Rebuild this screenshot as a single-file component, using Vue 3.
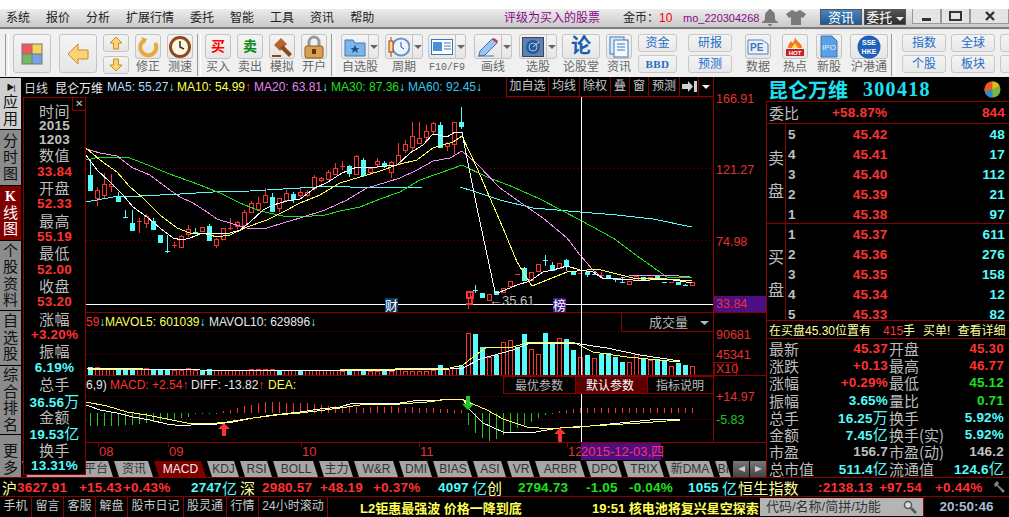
<template>
  <div class="app">
    <div class="topbar">
      <div class="menu">
        <span v-for="m in menus" :key="m">{{ m }}</span>
      </div>
      <span class="promo">评级为买入的股票</span>
      <span class="coin">金币：<b>10</b></span>
      <span class="uid">mo_220304268</span>
      <svg class="ico-bell" width="16" height="17" viewBox="0 0 16 17"><path d="M8 0c1 0 2 1 2 2 3 1 3 4 3 7 0 2 1 3 3 4v1H0v-1c2-1 3-2 3-4 0-3 0-6 3-7 0-1 1-2 2-2zM6 15h4c0 1-1 2-2 2s-2-1-2-2z" fill="#7a7a7a"/></svg>
      <svg class="ico-shirt" width="20" height="15" viewBox="0 0 20 15"><path d="M6 0l4 2 4-2 6 4-3 4-2-1v8H5V7L3 8 0 4z" fill="#7a7a7a"/></svg>
      <span class="btn-news">资讯</span>
      <span class="btn-trade">委托 <i class="caret white"></i></span>
      <div class="winbtns">
        <span class="win"><i class="w-min"></i></span>
        <span class="win"><i class="w-max"></i></span>
        <span class="win w3"><svg width="10" height="10" viewBox="0 0 10 10"><path d="M1 1l8 8M9 1l-8 8" stroke="#333" stroke-width="2.4"/></svg></span>
      </div>
    </div>

    <div class="toolbar">
      <i class="grip"></i>
      <div class="tool big ml4">
        <svg width="22" height="22" viewBox="0 0 22 22"><rect x=".5" y=".5" width="21" height="21" fill="#777"/><rect x="1.5" y="1.5" width="9" height="9" fill="#f05a5f"/><rect x="11.5" y="1.5" width="9" height="9" fill="#f8d25a"/><rect x="1.5" y="11.5" width="9" height="9" fill="#72b964"/><rect x="11.5" y="11.5" width="9" height="9" fill="#74a5e0"/></svg>
      </div>
      <div class="tool big ml8">
        <svg width="22" height="22" viewBox="0 0 22 22"><path d="M1 11L11 1v6h10v9H11v5z" fill="#fbd275" stroke="#cc8c20"/></svg>
      </div>
      <div class="updown ml6">
        <div class="tool mini"><svg width="14" height="14" viewBox="0 0 14 14"><path d="M7 1l6 6H9.500v6h-5V7H1z" fill="#fbd275" stroke="#cc8c20"/></svg></div>
        <div class="tool mini"><svg width="14" height="14" viewBox="0 0 14 14"><path d="M7 13l6-6H9.500V1h-5v6H1z" fill="#fbd275" stroke="#cc8c20"/></svg></div>
      </div>
      <div class="tool-col ml6">
        <div class="tool sq"><svg width="22" height="22" viewBox="0 0 22 22"><path d="M8 4a8 8 0 1 0 10 3" fill="none" stroke="#e8a93a" stroke-width="4"/><path d="M4 1l6 2-3 5z" fill="#e8a93a"/></svg></div>
        <span>修正</span>
      </div>
      <div class="tool-col ml6">
        <div class="tool sq"><svg width="22" height="22" viewBox="0 0 22 22"><circle cx="11" cy="11" r="9.500" fill="#fff6e0" stroke="#8a4a1a" stroke-width="3"/><path d="M11 5v6l4 2" fill="none" stroke="#333" stroke-width="1.500"/></svg></div>
        <span>测速</span>
      </div>
      <i class="grip ml4"></i>
      <div class="tool-col ml4">
        <div class="tool sq trade-r">买</div>
        <span>买入</span>
      </div>
      <div class="tool-col ml6">
        <div class="tool sq trade-g">卖</div>
        <span>卖出</span>
      </div>
      <div class="tool-col ml6">
        <div class="tool sq"><svg width="22" height="22" viewBox="0 0 22 22"><path d="M3 9l7-7 6 6-7 7z" fill="#b9652a"/><path d="M9 12l3-3 9 9-3 3z" fill="#8a4a1a"/><rect x="1" y="19" width="9" height="2" fill="#8a4a1a"/></svg></div>
        <span>模拟</span>
      </div>
      <div class="tool-col ml6">
        <div class="tool sq"><svg width="22" height="24" viewBox="0 0 22 24"><path d="M6 11V7a5 5 0 0 1 10 0v4" fill="none" stroke="#999" stroke-width="3"/><rect x="2" y="11" width="18" height="12" rx="2" fill="#d8a055" stroke="#8a5a20"/><rect x="9" y="14" width="4" height="5" fill="#5a3810"/></svg></div>
        <span>开户</span>
      </div>
      <i class="grip ml4"></i>
      <div class="tool-col wide ml6">
        <div class="tool split">
          <svg width="22" height="20" viewBox="0 0 22 20"><path d="M1 3h8l2 3h10v13H1z" fill="#7cb5e8" stroke="#3c78b4"/><path d="M11 8l1.500 3h3l-2.500 2 1 3-3-2-3 2 1-3-2.500-2h3z" fill="#1f4f8a"/></svg>
          <b class="dd"><i class="caret"></i></b>
        </div>
        <span>自选股</span>
      </div>
      <div class="tool-col wide ml6">
        <div class="tool split">
          <svg width="22" height="20" viewBox="0 0 22 20"><circle cx="13" cy="10" r="8.500" fill="#eef4fb" stroke="#6a95c4" stroke-width="2"/><path d="M13 5v5l3 2" stroke="#2a5a94" fill="none"/><path d="M3 0v20" stroke="#a33"/><rect x="1" y="4" width="4" height="11" fill="#ffe070" stroke="#a33"/></svg>
          <b class="dd"><i class="caret"></i></b>
        </div>
        <span>周期</span>
      </div>
      <div class="tool-col wide ml5">
        <div class="tool split">
          <svg width="22" height="20" viewBox="0 0 22 20"><rect x=".5" y="2.500" width="21" height="15" fill="#fff" stroke="#3c78b4"/><rect x="2" y="5" width="9" height="9" fill="#4a90d8"/><path d="M13 6h7M13 9h7M13 12h7" stroke="#3c78b4"/></svg>
          <b class="dd"><i class="caret"></i></b>
        </div>
        <span class="mono-label">F10/F9</span>
      </div>
      <div class="tool-col wide ml8">
        <div class="tool split">
          <svg width="22" height="20" viewBox="0 0 22 20"><path d="M3 14L15 2l5 4L8 18l-6 1z" fill="#9cc4ec" stroke="#3c78b4"/><path d="M15 2l5 4 1-2-4-3z" fill="#c33"/><path d="M1 19h16" stroke="#3c78b4"/></svg>
          <b class="dd"><i class="caret"></i></b>
        </div>
        <span>画线</span>
      </div>
      <div class="tool-col wide ml7">
        <div class="tool split">
          <svg width="22" height="20" viewBox="0 0 22 20"><rect x=".5" y=".5" width="21" height="19" fill="#5a82b8" stroke="#444"/><circle cx="11" cy="10" r="7" fill="#2a5a94"/><circle cx="11" cy="10" r="4" fill="none" stroke="#9cc4ec"/><path d="M11 10l6-5" stroke="#cfe4f8"/></svg>
          <b class="dd"><i class="caret"></i></b>
        </div>
        <span>选股</span>
      </div>
      <div class="tool-col wide ml5">
        <div class="tool sq lun">论</div>
        <span>论股堂</span>
      </div>
      <div class="tool-col ml6">
        <div class="tool sq"><svg width="20" height="22" viewBox="0 0 20 22"><rect x="1" y="1" width="14" height="17" fill="#dceafa" stroke="#3c78b4"/><rect x="5" y="4" width="14" height="17" fill="#f4f9ff" stroke="#3c78b4"/><path d="M8 8h8M8 11h8M8 14h8" stroke="#3c78b4"/></svg></div>
        <span>资讯</span>
      </div>
      <div class="txt-col w38 ml6"><span>资金</span><span class="bbd">BBD</span></div>
      <div class="txt-col w44 ml11"><span>研报</span><span>预测</span></div>
      <div class="tool-col ml13">
        <div class="tool sq"><svg width="22" height="22" viewBox="0 0 22 22"><path d="M1 4h14l6 4v10H1z" fill="#e8f0fa" stroke="#5a82b8"/><text x="3" y="15" class="svg-pe">PE</text></svg></div>
        <span>数据</span>
      </div>
      <div class="tool-col ml11">
        <div class="tool sq"><svg width="22" height="22" viewBox="0 0 22 22"><path d="M11 1c1 4 7 6 7 11H4c0-4 2-5 3-7 1 1 2 2 2 2 1-2 2-4 2-6z" fill="#f07a20"/><path d="M11 7c0 2 3 3 3 5H8c0-2 2-3 3-5z" fill="#fcd850"/><rect x="2" y="13" width="18" height="7" fill="#c82020"/><text x="11" y="19" class="svg-hot">HOT</text></svg></div>
        <span>热点</span>
      </div>
      <div class="tool-col ml8">
        <div class="tool sq"><svg width="18" height="23" viewBox="0 0 18 23"><path d="M1 1h11l5 5v16H1z" fill="#5aa0e6" stroke="#3c78b4"/><text x="9" y="15" class="svg-ipo">IPO</text></svg></div>
        <span>新股</span>
      </div>
      <div class="tool-col wide ml8">
        <div class="tool sq"><svg width="24" height="24" viewBox="0 0 24 24"><circle cx="12" cy="12" r="11.500" fill="#1f62b8"/><text x="12" y="10" class="svg-sse">SSE</text><text x="12" y="19" class="svg-sse">HKE</text></svg></div>
        <span>沪港通</span>
      </div>
      <i class="grip ml3"></i>
      <div class="txt-col w44 ml7"><span>指数</span><span>个股</span></div>
      <div class="txt-col w44 ml5"><span>全球</span><span>板块</span></div>
      <div class="txt-col w44 ml5 cut"><span>股</span><span>期</span></div>
    </div>

    <div class="main">
      <div class="sidetabs">
        <div v-for="t in sideTabs" :key="t.label" class="stab" :class="t.cls" :style="{ height: t.h + 'px' }">
          <i v-if="t.cls === 'light'" class="stab-play">▶|</i>
          <span v-for="(ch, i) in t.label" :key="i" :class="{ kchar: ch === 'K' }">{{ ch }}</span>
        </div>
      </div>

      <div class="chart">
        <div class="chart-head">
          <span class="hd-a">日线</span>
          <span class="hd-b">昆仑万维</span>
          <span v-for="m in maLabels" :key="m.t" class="ma" :style="{ color: m.c, width: m.w + 'px' }">{{ m.t }}<em :style="{ color: m.ac }">{{ m.a }}</em></span>
          <div class="hd-btns">
            <span class="b1">加自选</span>
            <span class="b2">均线</span>
            <span class="b2">除权</span>
            <span class="b3">叠</span>
            <span class="b3">窗</span>
            <span class="b2">预测</span>
            <span class="b4"><svg width="15" height="11" viewBox="0 0 15 11"><path d="M0 3h6V0l5 5.500L6 11V8H0zM12 0h3v11h-3z" fill="#d0d0d0"/></svg></span>
            <span class="b5"><i class="caret white"></i></span>
          </div>
        </div>

        <!-- price pane, viewBox keeps the coordinates of the window -->
        <svg class="pane" width="744" height="216" viewBox="22 97 744 216">
          <line v-for="y in [97.5, 168.5, 240.5]" :key="y" x1="86" x2="713" :y1="y" :y2="y" class="dot"/>
          <line x1="86" x2="713" y1="304.500" y2="304.500" stroke="#fff"/>
          <line x1="22" x2="766" y1="312.500" y2="312.500" class="rline"/>
          <line x1="713.500" x2="713.500" y1="97" y2="313" class="rline"/>
          <g shape-rendering="crispEdges">
            <g v-for="c in candles" :key="c.x">
              <line :x1="c.x + .5" :x2="c.x + .5" :y1="c.hi" :y2="c.lo" :stroke="c.col"/>
              <line v-if="c.flat" :x1="c.x - 2" :x2="c.x + 3" :y1="c.top + .5" :y2="c.top + .5" :stroke="c.col"/>
              <rect v-else :x="c.x - 1.5" :y="c.top + .5" width="4" :height="c.h" :stroke="c.col" :fill="c.up ? '#000' : c.col"/>
            </g>
            <polyline v-for="l in maLines" :key="l.c" :points="l.p" fill="none" :stroke="l.c"/>
          </g>
          <line x1="581.500" x2="581.500" y1="97" y2="313" stroke="#fff"/>
          <rect x="385" y="298" width="13" height="14" fill="#0a3a6c"/>
          <text x="385" y="310" class="t-mark">财</text>
          <path d="M467 292h6v6h-6zM472 296v8h-6" fill="none" stroke="#ff3232" stroke-width="2"/>
          <rect x="553" y="298" width="13" height="14" fill="#3c1a8c"/>
          <text x="553" y="310" class="t-mark">榜</text>
          <text x="489" y="305" class="t-low">←35.61</text>
          <text x="716" y="103" class="t-axis">166.91</text>
          <text x="716" y="174" class="t-axis">121.27</text>
          <text x="716" y="246" class="t-axis">74.98</text>
          <rect x="714" y="296" width="52" height="16" fill="#4b0f82"/>
          <text x="716" y="308" class="t-axis">33.84</text>
        </svg>

        <svg class="pane" width="744" height="63" viewBox="22 313 744 63">
          <line v-for="y in [331.5, 354.5]" :key="y" x1="86" x2="713" :y1="y" :y2="y" class="dot"/>
          <g shape-rendering="crispEdges">
            <rect v-for="v in volBars" :key="v.x" :x="v.x - 1.5" :y="v.top + .5" width="4" :height="v.h" :stroke="v.col" :fill="v.up ? '#000' : v.col"/>
            <polyline v-for="l in volLines" :key="l.c" :points="l.p" fill="none" :stroke="l.c"/>
          </g>
          <line x1="581.500" x2="581.500" y1="313" y2="376" stroke="#fff"/>
          <line x1="22" x2="766" y1="375.500" y2="375.500" class="rline"/>
          <line x1="713.500" x2="713.500" y1="313" y2="376" class="rline"/>
          <text y="326" class="t-lab">
            <tspan x="86" fill="#ff3232">59</tspan><tspan fill="#54fcfc">↓</tspan>
            <tspan x="105" fill="#ffff54">MAVOL5: 601039</tspan><tspan fill="#54fcfc">↓</tspan>
            <tspan x="209" fill="#e8e8e8">MAVOL10: 629896</tspan><tspan fill="#54fcfc">↓</tspan>
          </text>
          <rect x="621.500" y="312.500" width="92" height="19" fill="#000" class="rline"/>
          <text x="649" y="327" class="t-cjk">成交量</text>
          <path d="M700 321h9l-4.500 4z" fill="#bbb"/>
          <text x="716" y="339" class="t-axis">90681</text>
          <text x="716" y="359" class="t-axis">45341</text>
          <rect x="714.500" y="362.500" width="22" height="13" fill="none" class="rline"/>
          <text x="716" y="373" class="t-axis">X10</text>
        </svg>

        <svg class="pane" width="744" height="67" viewBox="22 376 744 67">
          <line v-for="y in [396.5, 419.5]" :key="y" x1="86" x2="713" :y1="y" :y2="y" class="dot"/>
          <g shape-rendering="crispEdges">
            <line v-for="b in macdBars" :key="b.x" :x1="b.x + .5" :x2="b.x + .5" :y1="b.y1" :y2="b.y2" :stroke="b.col"/>
            <polyline :points="macdWhite" fill="none" stroke="#fff"/>
            <polyline :points="macdYellow" fill="none" stroke="#ffff54"/>
          </g>
          <path d="M224 423l6 6h-4v7h-4v-7h-4z" fill="#ff3232"/>
          <path d="M560 428l6 6h-4v8h-4v-8h-4z" fill="#ff3232"/>
          <path d="M468 410l6-6h-4v-8h-4v8h-4z" fill="#1ec81e"/>
          <line x1="581.500" x2="581.500" y1="393" y2="443" stroke="#fff"/>
          <line x1="22" x2="766" y1="442.500" y2="442.500" class="rline"/>
          <line x1="713.500" x2="713.500" y1="376" y2="443" class="rline"/>
          <text y="389" class="t-lab">
            <tspan x="86" fill="#e8e8e8">6,9)</tspan>
            <tspan x="110" fill="#ff3232">MACD: +2.54</tspan><tspan fill="#ff3232">↑</tspan>
            <tspan x="191" fill="#e8e8e8">DIFF: -13.82</tspan><tspan fill="#ff3232">↑</tspan>
            <tspan x="268" fill="#ffff54">DEA:</tspan>
          </text>
          <rect x="503.500" y="376.500" width="72" height="17" fill="#000" class="rline"/>
          <rect x="575.500" y="376.500" width="72" height="17" fill="#5a0000" class="rline"/>
          <rect x="647.500" y="376.500" width="66" height="17" fill="#000" class="rline"/>
          <text x="515" y="390" class="t-para">最优参数</text>
          <text x="586" y="390" class="t-para hot">默认参数</text>
          <text x="656" y="390" class="t-para">指标说明</text>
          <text x="716" y="401" class="t-axis">+14.97</text>
          <text x="716" y="424" class="t-axis green">-5.83</text>
        </svg>

        <div class="xaxis">
          <span v-for="m in months" :key="m.t" class="month" :style="{ width: m.w + 'px' }"><i></i>{{ m.t }}</span>
          <span class="date">2015-12-03,四</span>
        </div>

        <div class="tabs">
          <span v-for="t in indicatorTabs" :key="t.t" class="tab" :class="{ on: t.t === 'MACD', first: t.t === '平台' }" :style="{ width: t.w + 'px' }">{{ t.t }}</span>
          <span class="tab-nav"><i class="tl"></i></span>
          <span class="tab-nav"><i class="tr"></i></span>
        </div>

        <!-- info panel lies over the chart -->
        <div class="info">
          <span class="close-x">✕</span>
          <div v-for="r in infoRows" :key="r.t" class="info-t" :class="r.k">{{ r.t }}<u v-if="r.u">{{ r.u }}</u></div>
        </div>
      </div>

      <div class="quote">
        <div class="q-title">
          <span class="q-name">昆仑万维</span>
          <span class="q-code">300418</span>
          <svg class="q-pie" width="17" height="17" viewBox="0 0 17 17"><circle cx="8.500" cy="8.500" r="8" fill="#7ab83c"/><path d="M8.500 8.500V.5A8 8 0 0 0 .9 11z" fill="#e85a20"/><path d="M8.500 8.500L.9 11a8 8 0 0 0 7.600 5.500z" fill="#2a8ad8"/><path d="M8.500 8.500L8.500.5a8 8 0 0 1 7 4z" fill="#e8b820"/></svg>
        </div>
        <div class="q-ratio">
          <span class="cjk-l">委比</span>
          <span class="num red ratio-v">+58.87%</span>
          <span class="num red ratio-n">844</span>
        </div>
        <div class="q-book sell">
          <div class="q-side"><span>卖</span><span>盘</span></div>
          <div class="q-rows">
            <div v-for="r in sells" :key="r[0]" class="q-row"><span class="num grey">{{ r[0] }}</span><span class="num red price">{{ r[1] }}</span><span class="num cyan vol">{{ r[2] }}</span></div>
          </div>
        </div>
        <div class="q-book buy">
          <div class="q-side"><span>买</span><span>盘</span></div>
          <div class="q-rows">
            <div v-for="r in buys" :key="r[0]" class="q-row"><span class="num grey">{{ r[0] }}</span><span class="num red price">{{ r[1] }}</span><span class="num cyan vol">{{ r[2] }}</span></div>
          </div>
        </div>
        <div class="q-notice">
          <span>在买盘45.30位置有</span>
          <span class="n-hand"><em>415</em>手</span>
          <span class="n-buy">买单!</span>
          <span class="n-more">查看详细</span>
        </div>
        <div class="q-stats">
          <div v-for="s in stats" :key="s.l" class="s-cell">
            <span class="cjk-l">{{ s.l }}</span>
            <span class="num" :class="s.c">{{ s.v }}<u v-if="s.u">{{ s.u }}</u></span>
          </div>
        </div>
      </div>
    </div>

    <div class="ticker">
      <span v-for="(t, i) in ticks" :key="i" :class="t.c" :style="{ width: t.w + 'px' }">{{ t.t }}</span>
      <svg width="14" height="14" viewBox="0 0 14 14"><path d="M1 4l3-3 2 2-1 2 7 6-2 2-6-7-2 1z" fill="#808080"/></svg>
    </div>

    <div class="bottom">
      <span v-for="b in bottomBtns" :key="b.t" class="bb" :style="{ width: b.w + 'px' }">{{ b.t }}</span>
      <span class="news n1">L2钜惠最强波 价格一降到底</span>
      <span class="news n2">19:51 核电池将复兴星空探索</span>
      <div class="search">
        <span>代码/名称/简拼/功能</span>
        <svg width="14" height="14" viewBox="0 0 14 14"><circle cx="5" cy="5" r="3.500" fill="#ddd" stroke="#555" stroke-width="1.500"/><path d="M8 8l5 5" stroke="#555" stroke-width="2.500"/></svg>
      </div>
      <span class="clock">20:50:46</span>
    </div>
  </div>
</template>

<script setup>
const RED = '#ff3232'
const CYAN = '#54fcfc'

const menus = ['系统', '报价', '分析', '扩展行情', '委托', '智能', '工具', '资讯', '帮助']

const sideTabs = [
  { label: '应用', h: 51, cls: 'light' },
  { label: '分时图', h: 55, cls: '' },
  { label: 'K线图', h: 54, cls: 'active' },
  { label: '个股资料', h: 69, cls: '' },
  { label: '自选股', h: 54, cls: '' },
  { label: '综合排名', h: 68, cls: '' },
  { label: '更多', h: 49, cls: '' }
]

const maLabels = [
  { t: 'MA5: 55.27', a: '↓', c: '#b8dcff', ac: CYAN, w: 70 },
  { t: 'MA10: 54.99', a: '↑', c: '#ffff54', ac: RED, w: 77 },
  { t: 'MA20: 63.81', a: '↓', c: '#e884f0', ac: CYAN, w: 77 },
  { t: 'MA30: 87.36', a: '↓', c: '#1ee01e', ac: CYAN, w: 77 },
  { t: 'MA60: 92.45', a: '↓', c: '#34c8f0', ac: CYAN, w: 80 }
]

// 数据按放大3倍量出来的，[high, low, top, bottom, r/c]
const raw = [
  [260, 345, 300, 345, 'c'], [335, 392, 345, 370, 'r'], [295, 372, 327, 360, 'r'], [298, 350, 327, 332, 'r'],
  [350, 378, 367, 378, 'c'], [405, 425, 425, 425, 'c'], [405, 465, 445, 465, 'c'], [430, 475, 437, 437, 'r'],
  [418, 460, 422, 445, 'r'], [430, 462, 437, 462, 'c'], [480, 500, 480, 500, 'c'], [480, 533, 529, 529, 'c'],
  [500, 520, 510, 510, 'r'], [480, 518, 484, 515, 'r'], [450, 485, 462, 478, 'r'], [460, 472, 470, 470, 'c'],
  [457, 467, 457, 467, 'r'], [447, 495, 453, 495, 'c'], [490, 520, 493, 510, 'r'], [460, 495, 460, 493, 'r'],
  [430, 465, 458, 458, 'r'], [438, 462, 442, 452, 'r'], [405, 455, 412, 450, 'r'], [378, 415, 385, 412, 'r'],
  [365, 405, 385, 402, 'r'], [340, 380, 360, 380, 'r'], [355, 410, 367, 407, 'c'], [368, 412, 368, 400, 'r'],
  [345, 380, 353, 375, 'r'], [350, 385, 358, 372, 'c'],
  [340, 365, 350, 360, 'r'], [345, 365, 350, 360, 'r'], [300, 345, 307, 340, 'r'], [305, 320, 310, 315, 'r'],
  [285, 315, 292, 312, 'r'], [265, 300, 278, 298, 'r'], [258, 285, 272, 272, 'r'], [270, 305, 272, 295, 'c'],
  [240, 300, 243, 297, 'r'], [248, 305, 255, 300, 'c'], [275, 300, 280, 292, 'r'], [250, 278, 258, 268, 'r'],
  [258, 280, 265, 272, 'c'], [258, 308, 262, 290, 'r'], [205, 270, 240, 268, 'r'], [195, 235, 208, 225, 'r'],
  [140, 228, 182, 215, 'r'], [140, 205, 190, 205, 'r'], [150, 195, 168, 185, 'r'], [140, 178, 145, 168, 'r'],
  [140, 215, 150, 215, 'c'], [200, 228, 204, 212, 'r'], [140, 238, 140, 208, 'r'], [96, 162, 142, 152, 'c'],
  [650, 703, 650, 668, 'r'], [630, 655, 645, 645, 'c'], [653, 665, 653, 665, 'c'], [658, 675, 658, 675, 'r'],
  [648, 656, 648, 656, 'c'], [638, 652, 638, 652, 'r'], [618, 632, 618, 632, 'r'], [596, 596, 596, 596, 'r'],
  [575, 615, 580, 615, 'c'], [592, 615, 592, 615, 'r'], [568, 588, 568, 588, 'r'], [540, 572, 555, 555, 'c'],
  [560, 585, 570, 585, 'c'], [563, 578, 563, 578, 'r'], [552, 588, 555, 570, 'c'], [587, 598, 587, 598, 'c'],
  [594, 594, 594, 594, 'r'], [590, 605, 592, 598, 'c'], [598, 598, 598, 598, 'c'], [592, 608, 601, 601, 'r'],
  [600, 610, 600, 610, 'c'], [612, 620, 612, 612, 'c'], [610, 622, 622, 622, 'c'], [618, 626, 618, 626, 'r'],
  [602, 614, 602, 614, 'r'], [605, 612, 605, 612, 'c'], [606, 612, 606, 612, 'r'], [600, 610, 600, 610, 'c'],
  [622, 622, 622, 622, 'c'], [620, 620, 620, 620, 'r'], [620, 626, 620, 626, 'c'], [626, 632, 630, 630, 'c'],
  [622, 632, 622, 630, 'r']
]

const sy = z => 75 + z / 3
const candles = raw.map((r, i) => {
  const top = Math.round(sy(r[2]))
  const bottom = Math.round(sy(r[3]))
  const up = r[4] === 'r'
  return {
    x: 90 + 7 * i,
    hi: Math.round(sy(r[0])),
    lo: Math.round(sy(r[1])),
    top,
    h: Math.max(bottom - top, 1),
    flat: bottom - top < 2,
    up,
    col: up ? RED : CYAN
  }
})

// left = 第一张放大图 (x/3)，right = 第二张 (300 + x/3)
const toPoints = (left, right, y0) => {
  const a = left.map(p => `${Math.round(p[0] / 3)},${Math.round(y0 + p[1] / 3)}`)
  const b = right.map(p => `${Math.round(300 + p[0] / 3)},${Math.round(y0 + p[1] / 3)}`)
  return a.concat(b).join(' ')
}

const maLines = [
  { c: '#54fcfc', p: toPoints([[258, 380], [340, 365], [420, 362], [540, 358], [640, 350], [750, 348], [900, 340]], [[100, 333], [200, 338], [370, 335], [480, 335], [520, 348], [600, 375], [700, 398], [840, 410], [950, 420], [1060, 432], [1175, 455]], 75) },
  { c: '#1ee01e', p: toPoints([[258, 255], [300, 245], [380, 245], [430, 265], [500, 295], [600, 330], [660, 355], [720, 385], [780, 408], [850, 422], [900, 427]], [[75, 420], [120, 408], [180, 395], [240, 372], [300, 350], [360, 315], [420, 295], [487, 270], [560, 305], [640, 335], [720, 372], [840, 435], [940, 490], [1020, 550], [1100, 605], [1175, 610]], 75) },
  { c: '#f090f0', p: toPoints([[258, 222], [300, 235], [350, 242], [400, 280], [450, 300], [500, 340], [540, 365], [580, 385], [620, 410], [650, 432], [700, 448], [740, 458], [800, 458], [850, 445], [900, 430]], [[75, 405], [140, 375], [200, 340], [260, 320], [300, 310], [350, 285], [400, 258], [450, 248], [487, 228], [530, 268], [600, 340], [680, 395], [730, 430], [800, 490], [840, 540], [880, 585], [910, 608], [950, 612], [1000, 600], [1100, 600], [1170, 606]], 75) },
  { c: '#ffff54', p: toPoints([[258, 218], [300, 255], [350, 290], [390, 335], [430, 370], [480, 420], [530, 460], [570, 475], [610, 475], [650, 487], [690, 480], [740, 455], [800, 435], [850, 410], [900, 385]], [[60, 360], [120, 325], [180, 305], [240, 288], [300, 268], [350, 255], [400, 220], [460, 200], [487, 182], [530, 280], [570, 370], [610, 460], [650, 560], [695, 634], [740, 615], [800, 590], [890, 583], [950, 598], [1000, 608], [1100, 612], [1175, 618]], 75) },
  { c: '#ffffff', p: toPoints([[258, 240], [290, 285], [330, 320], [370, 360], [400, 395], [440, 425], [480, 460], [520, 490], [545, 495], [570, 490], [600, 478], [640, 475], [690, 475], [720, 465], [750, 440], [790, 405], [820, 390], [860, 378], [900, 372]], [[45, 340], [85, 322], [125, 295], [170, 275], [230, 275], [290, 270], [330, 235], [370, 210], [400, 178], [440, 185], [465, 172], [485, 172], [500, 250], [530, 400], [585, 650], [600, 652], [650, 630], [690, 618], [730, 590], [760, 585], [800, 572], [840, 585], [880, 590], [905, 610], [950, 612], [1000, 615], [1050, 615], [1100, 612], [1175, 625]], 75) }
]

const volHeights = [
  8, 8, 7, 7, 5, 5, 7, 7, 7, 6, 6, 6, 5, 5, 7, 5, 5, 6, 5, 5, 5, 5, 5, 6, 6, 6, 6, 5, 5, 5, 5, 5, 5, 5, 5, 5,
  4, 4, 6, 6, 4, 4, 4, 4, 6, 4, 4, 4, 4, 5, 10, 6, 7, 9,
  42, 41, 28, 18, 20, 33, 35, 28, 41, 26, 21, 42, 32, 37, 36, 25, 18, 20, 17, 21, 22, 18, 13, 13, 21, 16, 15, 16, 14, 9, 12, 10, 9
]
const volKinds = 'crrrccc' + 'rrcccrrrrccrrrrrrrrrcrrcrrrrr' + 'rcrcrrcrrrrrrrcrrc' + 'rccrcrrccrrccrccrcrccccrrcrccrc' + 'cr'
const volBars = volHeights.map((h, i) => {
  const up = volKinds[i] === 'r'
  return { x: 90 + 7 * i, top: 375 - h, h, up, col: up ? RED : CYAN }
})

const volPts = (left, right) => {
  const a = left.map(p => `${Math.round(p[0] / 3)},${Math.round(300 + p[1] / 3)}`)
  const b = right.map(p => `${Math.round(340 + p[0] / 3)},${Math.round(300 + p[1] / 3)}`)
  return a.concat(b).join(' ')
}
const volLines = [
  { c: '#ffff54', p: volPts([[258, 207], [600, 210], [1020, 210]], [[330, 205], [370, 195], [400, 170], [440, 140], [520, 140], [570, 125], [640, 130], [700, 125], [760, 155], [860, 172], [1020, 185]]) },
  { c: '#ffffff', p: volPts([[258, 204], [600, 210], [1020, 212]], [[330, 208], [370, 205], [420, 178], [520, 150], [570, 128], [700, 128], [800, 145], [900, 165], [1020, 182]]) }
]

const macdLens = [13, 13, 13, 13, 13, 12, 12, 11, 10, 9, 8, 7, 6, 5, 4, 1, 1, 1, 1,
  -2, -3, -5, -7, -8, -10, -11, -11, -11, -10, -10, -10, -10, -9, -8, -7, -7, -6, -7, -6, -5, -6, -7, -6, -7, -6, -5, -6, -5, -5, -5, -4, -4, -3, -3,
  12, 20, 25, 28, 26, 22, 20, 15, 12, 9, 5, 2, 1, -2, -3, -4, -5, -5, -5, -5, -5, -5, -5, -5, -5, -5, -5, -5, -5, -5, -5, -5, -5]
const macdBars = macdLens.map((n, i) => ({
  x: 90 + 7 * i,
  y1: 413,
  y2: 413 + n,
  col: n > 0 ? '#1ec81e' : RED
}))
const macdWhite = volPts(
  [[258, 315], [300, 330], [350, 340], [400, 350], [450, 360], [500, 372], [550, 377], [600, 372], [650, 372], [700, 365], [760, 355], [820, 345], [900, 335], [960, 328], [1020, 320]],
  [[40, 310], [100, 312], [180, 310], [240, 300], [300, 300], [370, 298], [385, 325], [430, 370], [490, 397], [570, 400], [620, 390], [660, 385], [720, 380], [780, 375], [840, 368], [930, 360], [1020, 358]]
)
const macdYellow = volPts(
  [[258, 305], [320, 318], [380, 335], [440, 345], [500, 358], [560, 370], [620, 372], [680, 367], [760, 355], [830, 345], [900, 340], [950, 333], [1020, 325]],
  [[60, 315], [100, 312], [180, 312], [260, 305], [330, 298], [370, 300], [400, 312], [440, 330], [490, 358], [560, 380], [630, 388], [700, 382], [800, 375], [900, 368], [1020, 360]]
)

const months = [
  { t: '08', w: 70 },
  { t: '09', w: 133 },
  { t: '10', w: 118 },
  { t: '11', w: 148 },
  { t: '12', w: 14 }
]

const indicatorTabs = [
  { t: '平台', w: 92 }, { t: '资讯', w: 40 }, { t: 'MACD', w: 53 }, { t: 'KDJ', w: 33 }, { t: 'RSI', w: 33 },
  { t: 'BOLL', w: 46 }, { t: '主力', w: 35 }, { t: 'W&R', w: 45 }, { t: 'DMI', w: 34 }, { t: 'BIAS', w: 40 },
  { t: 'ASI', w: 34 }, { t: 'VR', w: 28 }, { t: 'ARBR', w: 51 }, { t: 'DPO', w: 37 }, { t: 'TRIX', w: 42 },
  { t: '新DMA', w: 50 }, { t: 'BI', w: 17 }
]

const infoRows = [
  { t: '时间', k: 'lab' }, { t: '2015', k: 'white short' }, { t: '1203', k: 'white short' },
  { t: '数值', k: 'lab' }, { t: '33.84', k: 'rd' }, { t: '开盘', k: 'lab' }, { t: '52.33', k: 'rd' },
  { t: '最高', k: 'lab' }, { t: '55.19', k: 'rd' }, { t: '最低', k: 'lab' }, { t: '52.00', k: 'rd' },
  { t: '收盘', k: 'lab' }, { t: '53.20', k: 'rd' }, { t: '涨幅', k: 'lab' }, { t: '+3.20%', k: 'rd' },
  { t: '振幅', k: 'lab' }, { t: '6.19%', k: 'cy' }, { t: '总手', k: 'lab' }, { t: '36.56', u: '万', k: 'cy' },
  { t: '金额', k: 'lab' }, { t: '19.53', u: '亿', k: 'cy' }, { t: '换手', k: 'lab' }, { t: '13.31%', k: 'cy' }
]

const sells = [['5', '45.42', '48'], ['4', '45.41', '17'], ['3', '45.40', '112'], ['2', '45.39', '21'], ['1', '45.38', '97']]
const buys = [['1', '45.37', '611'], ['2', '45.36', '276'], ['3', '45.35', '158'], ['4', '45.34', '12'], ['5', '45.33', '82']]

const stats = [
  { l: '最新', v: '45.37', c: 'red' }, { l: '开盘', v: '45.30', c: 'red' },
  { l: '涨跌', v: '+0.13', c: 'red' }, { l: '最高', v: '46.77', c: 'red' },
  { l: '涨幅', v: '+0.29%', c: 'red' }, { l: '最低', v: '45.12', c: 'green' },
  { l: '振幅', v: '3.65%', c: 'cyan' }, { l: '量比', v: '0.71', c: 'green' },
  { l: '总手', v: '16.25', u: '万', c: 'cyan' }, { l: '换手', v: '5.92%', c: 'cyan' },
  { l: '金额', v: '7.45', u: '亿', c: 'cyan' }, { l: '换手(实)', v: '5.92%', c: 'cyan' },
  { l: '市盈', v: '156.7', c: 'grey' }, { l: '市盈(动)', v: '146.2', c: 'grey' },
  { l: '总市值', v: '511.4', u: '亿', c: 'cyan' }, { l: '流通值', v: '124.6', u: '亿', c: 'cyan' }
]

const ticks = [
  { t: '沪', c: 'tk-y', w: 15 }, { t: '3627.91', c: 'tk-r', w: 62 }, { t: '+15.43', c: 'tk-r', w: 44 }, { t: '+0.43%', c: 'tk-r', w: 68 },
  { t: '2747', c: 'tk-c', w: 31 }, { t: '亿', c: 'tk-cc', w: 18 }, { t: '深', c: 'tk-y', w: 22 }, { t: '2980.57', c: 'tk-r', w: 58 },
  { t: '+48.19', c: 'tk-r', w: 53 }, { t: '+0.37%', c: 'tk-r', w: 65 }, { t: '4097', c: 'tk-c', w: 34 }, { t: '亿', c: 'tk-cc', w: 15 },
  { t: '创', c: 'tk-y', w: 31 }, { t: '2794.73', c: 'tk-g', w: 68 }, { t: '-1.05', c: 'tk-g', w: 43 }, { t: '-0.04%', c: 'tk-g', w: 59 },
  { t: '1055', c: 'tk-c', w: 34 }, { t: '亿', c: 'tk-cc', w: 16 }, { t: '恒生指数', c: 'tk-y', w: 80 }, { t: ':2138.13', c: 'tk-r', w: 61 },
  { t: '+97.54', c: 'tk-r', w: 56 }, { t: '+0.44%', c: 'tk-r', w: 58 }
]

const bottomBtns = [
  { t: '手机', w: 32 }, { t: '留言', w: 32 }, { t: '客服', w: 32 }, { t: '解盘', w: 32 },
  { t: '股市日记', w: 56 }, { t: '股灵通', w: 43 }, { t: '行情', w: 32 }, { t: '24小时滚动', w: 69 }
]
</script>

<style scoped>
.app {
  width: 1009px;
  height: 517px;
  overflow: hidden;
  background: #000;
  display: flex;
  flex-direction: column;
  font-family: "Liberation Sans", "Noto Sans CJK SC", sans-serif;
}
.topbar {
  height: 30px;
  padding-top: 9px;
  box-sizing: border-box;
  background: linear-gradient(#fff 0 9px, #ececec 9px, #c9c9c9 27px, #7d7d7d 27px, #7d7d7d 29px, #e6e6e6 29px);
  display: flex;
  align-items: flex-start;
  font-size: 12px;
  color: #222;
  line-height: 18px;
}
.menu {
  display: flex;
  gap: 16px;
  padding-left: 6px;
  width: 504px;
  box-sizing: border-box;
}
.promo {
  color: #8a0a8a;
  width: 119px;
}
.coin {
  width: 60px;
}
.coin b {
  font-weight: 400;
  color: #f00;
}
.uid {
  color: #8a0a8a;
  font-size: 11px;
  width: 79px;
}
.ico-bell {
  margin-right: 8px;
  margin-top: 0;
}
.ico-shirt {
  margin: 1px 14px 0 0;
}
.btn-news,
.btn-trade {
  width: 42px;
  height: 16px;
  line-height: 16px;
  text-align: center;
  color: #fff;
  font-size: 13px;
  border: 1px solid #555;
  box-sizing: border-box;
  white-space: nowrap;
}
.btn-news {
  background: linear-gradient(#4c86c0, #1f5a92);
  margin-right: 2px;
}
.btn-trade {
  background: linear-gradient(#555, #2c2c2c);
}
.caret {
  display: inline-block;
  width: 0;
  height: 0;
  border: 4px solid transparent;
  border-top: 4px solid #666;
  border-bottom: 0;
  vertical-align: middle;
}
.caret.white {
  border-top-color: #eee;
}
.winbtns {
  display: flex;
  margin-left: 6px;
  height: 15px;
}
.win {
  width: 29px;
  height: 15px;
  border: 1px solid #999;
  border-top: 0;
  box-sizing: border-box;
  display: flex;
  align-items: center;
  justify-content: center;
  background: #e4e4e4;
}
.w3 {
  width: 39px;
}
.w-min {
  width: 9px;
  height: 3px;
  background: #333;
  margin-top: 6px;
}
.w-max {
  width: 9px;
  height: 6px;
  border: 2px solid #333;
}

.toolbar {
  height: 47px;
  background: #f0f0f0;
  display: flex;
  align-items: flex-start;
  padding: 4px 0 0 5px;
  box-sizing: border-box;
  overflow: hidden;
  flex: none;
}
.grip {
  width: 2px;
  height: 42px;
  border-left: 1px solid #999;
  border-right: 1px solid #fff;
  flex: none;
}
.ml3 { margin-left: 3px; }
.ml4 { margin-left: 4px; }
.ml5 { margin-left: 5px; }
.ml6 { margin-left: 6px; }
.ml7 { margin-left: 7px; }
.ml8 { margin-left: 8px; }
.ml11 { margin-left: 11px; }
.ml13 { margin-left: 13px; }
.tool {
  box-sizing: border-box;
  border: 1px solid #c4c4c4;
  border-radius: 3px;
  background: linear-gradient(#f4f4f4, #e6e6e6);
  display: flex;
  align-items: center;
  justify-content: center;
  flex: none;
}
.big {
  width: 38px;
  height: 39px;
}
.updown {
  display: flex;
  flex-direction: column;
  gap: 4px;
}
.mini {
  width: 26px;
  height: 18px;
}
.tool-col {
  display: flex;
  flex-direction: column;
  align-items: center;
  width: 26px;
  flex: none;
  font-size: 12px;
  color: #666;
  line-height: 17px;
  white-space: nowrap;
}
.tool-col.wide {
  width: 38px;
}
.sq {
  width: 100%;
  height: 25px;
}
.split {
  width: 100%;
  height: 25px;
  justify-content: flex-start;
  padding-left: 2px;
}
.split .dd {
  margin-left: 2px;
  border-left: 1px solid #c4c4c4;
  height: 23px;
  flex: 1;
  display: flex;
  align-items: center;
  justify-content: center;
}
.trade-r,
.trade-g {
  font-family: "Liberation Serif", "Noto Sans CJK SC", serif;
  font-weight: 700;
  font-size: 14px;
}
.trade-r { color: #f00; }
.trade-g { color: #0a8a20; }
.lun {
  color: #1560ac;
  font-size: 20px;
  font-weight: 700;
}
.mono-label {
  font-family: "Liberation Mono", monospace;
  font-size: 10px;
}
.svg-pe {
  font: 700 10px "Liberation Sans", sans-serif;
  fill: #3c78b4;
}
.svg-hot {
  font: 700 6px "Liberation Sans", sans-serif;
  fill: #fff;
  text-anchor: middle;
}
.svg-ipo {
  font: 8px "Liberation Sans", sans-serif;
  fill: #e8f4ff;
  text-anchor: middle;
}
.svg-sse {
  font: 700 7px "Liberation Sans", sans-serif;
  fill: #fff;
  text-anchor: middle;
}
.txt-col {
  display: flex;
  flex-direction: column;
  gap: 3px;
  flex: none;
}
.txt-col span {
  height: 18px;
  line-height: 16px;
  box-sizing: border-box;
  text-align: center;
  font-size: 12px;
  color: #1c6cc8;
  border: 1px solid #c8c8c8;
  border-radius: 3px;
  background: linear-gradient(#f4f4f4, #e8e8e8);
}
.txt-col.cut span {
  text-align: left;
  padding-left: 10px;
}
.txt-col .bbd {
  font: 700 11px "Liberation Serif", serif;
  line-height: 16px;
  letter-spacing: .5px;
}
.w38 { width: 39px; }
.w44 { width: 44px; }

.main {
  height: 400px;
  display: flex;
  flex: none;
}
.sidetabs {
  width: 22px;
  flex: none;
  padding-top: 1px;
  display: flex;
  flex-direction: column;
  gap: 1px;
  box-sizing: border-box;
  overflow: hidden;
}
.stab {
  width: 21px;
  flex: none;
  background: #8c8c8c;
  color: #111;
  display: flex;
  flex-direction: column;
  align-items: center;
  justify-content: center;
  font-size: 15px;
  line-height: 16.500px;
  box-sizing: border-box;
}
.stab.light {
  background: #cfcfcf;
  justify-content: flex-start;
  padding-top: 4px;
}
.stab-play {
  font-size: 8px;
  font-style: normal;
  line-height: 12px;
  letter-spacing: -1px;
}
.stab.active {
  background: #800000;
  color: #fff;
}
.kchar {
  font: 700 14px "Liberation Serif", serif;
}

.chart {
  width: 744px;
  flex: none;
  position: relative;
  display: flex;
  flex-direction: column;
}
.chart-head {
  height: 20px;
  display: flex;
  align-items: center;
  font-size: 12px;
  white-space: nowrap;
}
.hd-a {
  color: #d8d8d8;
  width: 33px;
  padding-left: 2px;
  box-sizing: border-box;
}
.hd-b {
  color: #eee;
  width: 52px;
}
.ma {
  font-size: 12px;
  flex: none;
}
.ma em {
  font-style: normal;
}
.hd-btns {
  position: absolute;
  left: 484px;
  top: 0;
  display: flex;
  height: 20px;
  border: 1px solid #8c0000;
  border-top: 0;
  box-sizing: border-box;
}
.hd-btns span {
  color: #c8c8c8;
  text-align: center;
  line-height: 19px;
  border-right: 1px solid #8c0000;
  box-sizing: border-box;
  display: flex;
  align-items: center;
  justify-content: center;
}
.hd-btns span:last-child { border-right: 0; }
.b1 { width: 42px; }
.b2 { width: 31px; }
.b3 { width: 19px; }
.b4 { width: 19px; }
.b5 { width: 14px; }
.pane {
  display: block;
  flex: none;
  overflow: visible;
}
.dot {
  stroke: #8c0000;
  stroke-dasharray: 1 3;
}
.rline {
  stroke: #8c0000;
}
.t-axis {
  font: 12.500px "Liberation Sans", sans-serif;
  fill: #e63232;
}
.t-axis.green {
  fill: #1ec81e;
}
.t-mark {
  font: 13px "Noto Sans CJK SC", sans-serif;
  fill: #fff;
}
.t-low {
  font: 13px "Liberation Sans", sans-serif;
  fill: #bbb;
}
.t-lab {
  font: 12px "Liberation Sans", sans-serif;
}
.t-cjk,
.t-para {
  font: 13px "Noto Sans CJK SC", sans-serif;
  fill: #b8b8b8;
}
.t-para {
  font-size: 12px;
}
.t-para.hot {
  fill: #fff;
}
.xaxis {
  height: 18px;
  display: flex;
  padding-left: 76px;
  position: relative;
  flex: none;
  color: #e63232;
  font-size: 13px;
  line-height: 18px;
}
.month {
  flex: none;
  position: relative;
  padding-left: 1px;
  box-sizing: border-box;
}
.month i {
  position: absolute;
  left: 0;
  top: 0;
  width: 1px;
  height: 4px;
  background: #8c0000;
}
.date {
  position: absolute;
  left: 559px;
  top: 0;
  width: 80px;
  height: 17px;
  background: #4b0f82;
  color: #ff3264;
  font-size: 13px;
  line-height: 17px;
  white-space: nowrap;
}
.tabs {
  height: 16px;
  display: flex;
  flex: none;
  align-items: stretch;
}
.tab {
  flex: none;
  background: #a6a6a6;
  color: #333;
  font-size: 12px;
  line-height: 16px;
  text-align: center;
  clip-path: polygon(0 0, calc(100% - 6px) 0, calc(100% - 1px) 100%, 5px 100%);
  white-space: nowrap;
  overflow: hidden;
}
.tab.first {
  text-align: right;
  padding-right: 6px;
  box-sizing: border-box;
}
.tab.on {
  background: #800000;
  color: #eee;
}
.tab-nav {
  width: 16px;
  flex: none;
  margin-left: 1px;
  background: linear-gradient(#777, #444);
  display: flex;
  align-items: center;
  justify-content: center;
}
.tab-nav i {
  width: 0;
  height: 0;
  border: 3px solid transparent;
}
.tab-nav .tl {
  border-right: 7px solid #ccc;
  border-left: 0;
}
.tab-nav .tr {
  border-left: 7px solid #ccc;
  border-right: 0;
}
.info {
  position: absolute;
  left: 1px;
  top: 20px;
  width: 63px;
  height: 378px;
  background: #000;
  border: 1px solid #8c0000;
  box-sizing: border-box;
  padding-top: 5px;
  display: flex;
  flex-direction: column;
  align-items: center;
}
.close-x {
  position: absolute;
  right: 0;
  top: 0;
  width: 12px;
  height: 12px;
  line-height: 12px;
  font-size: 10px;
  text-align: center;
  color: #ccc;
  border-left: 1px solid #8c0000;
  border-bottom: 1px solid #8c0000;
}
.info-t {
  height: 16.350px;
  line-height: 16px;
  white-space: nowrap;
  text-align: center;
  flex: none;
}
.info-t u {
  text-decoration: none;
  font: 15px/16px "Noto Sans CJK SC", sans-serif;
}
.info-t.lab {
  font: 15px/16px "Noto Sans CJK SC", sans-serif;
  color: #bdbdbd;
  letter-spacing: .5px;
}
.info-t.white,
.info-t.rd,
.info-t.cy {
  font: 700 13.500px/16px "Liberation Sans", "Noto Sans CJK SC", sans-serif;
  letter-spacing: .2px;
}
.info-t.white { color: #c0c0c0; }
.info-t.short { height: 14px; line-height: 14px; }
.info-t.rd { color: #ff3232; }
.info-t.cy { color: #54fcfc; }

.quote {
  flex: 1;
  display: flex;
  flex-direction: column;
  min-width: 0;
}
.q-title {
  height: 24px;
  display: flex;
  align-items: center;
  padding-left: 2px;
  color: #1ee0f0;
  font-family: "Liberation Serif", "Noto Sans CJK SC", serif;
  font-weight: 700;
}
.q-name {
  font-size: 20px;
  letter-spacing: 0;
  width: 95px;
}
.q-code {
  font-size: 20px;
  letter-spacing: 1.300px;
}
.q-pie {
  margin-left: auto;
  margin-right: 8px;
}
.q-ratio,
.q-book,
.q-notice,
.q-stats {
  border-left: 1px solid #8c0000;
  border-top: 1px solid #8c0000;
  box-sizing: border-box;
}
.q-ratio {
  height: 22px;
  display: flex;
  align-items: center;
  padding-left: 2px;
}
.cjk-l {
  font: 15px/17px "Noto Sans CJK SC", sans-serif;
  color: #bdbdbd;
  white-space: nowrap;
}
.num {
  font: 700 13.500px/17px "Liberation Sans", sans-serif;
  letter-spacing: .2px;
  white-space: nowrap;
}
.num u {
  text-decoration: none;
  font: 15px/17px "Noto Sans CJK SC", sans-serif;
}
.red { color: #ff3232; }
.cyan { color: #54fcfc; }
.green { color: #1ee01e; }
.grey { color: #c0c0c0; }
.ratio-v {
  margin-left: 33px;
}
.ratio-n {
  margin-left: auto;
  margin-right: 4px;
}
.q-book {
  display: flex;
}
.sell { height: 100px; }
.buy { height: 97px; overflow: hidden; }
.q-side {
  width: 18px;
  flex: none;
  border-right: 1px solid #8c0000;
  display: flex;
  flex-direction: column;
  align-items: center;
  justify-content: center;
  gap: 15px;
  font: 16px/18px "Noto Sans CJK SC", sans-serif;
  color: #bdbdbd;
}
.q-rows {
  flex: 1;
  min-width: 0;
}
.q-row {
  height: 20px;
  display: flex;
  align-items: center;
  padding: 0 4px 0 2px;
}
.price {
  margin-left: 57px;
}
.vol {
  margin-left: auto;
}
.q-notice {
  height: 18px;
  display: flex;
  align-items: center;
  padding-left: 2px;
  font-size: 12px;
  color: #ffff9c;
  white-space: nowrap;
  overflow: hidden;
}
.n-hand {
  margin-left: 12px;
}
.n-hand em {
  font-style: normal;
  color: #ff3232;
}
.n-buy {
  margin-left: 8px;
}
.n-more {
  margin-left: 7px;
}
.q-stats {
  height: 139px;
  padding: 1px 4px 0 2px;
  display: grid;
  grid-template-columns: 120px 116px;
  grid-auto-rows: 17.200px;
}
.s-cell {
  display: flex;
  justify-content: space-between;
  align-items: center;
  padding-right: 1px;
}

.ticker {
  height: 20px;
  flex: none;
  display: flex;
  align-items: center;
  padding-left: 2px;
  border-top: 1px solid #8c0000;
  border-bottom: 1px solid #8c0000;
  box-sizing: border-box;
  white-space: nowrap;
}
.ticker span {
  flex: none;
  font: 700 13.500px "Liberation Sans", sans-serif;
  letter-spacing: .2px;
}
.tk-r { color: #ff3232; }
.tk-g { color: #1ee01e; }
.tk-c { color: #54fcfc; }
.ticker .tk-y {
  color: #ffff9c;
  font: 15px "Noto Sans CJK SC", sans-serif;
}
.ticker .tk-cc {
  color: #54fcfc;
  font: 15px "Noto Sans CJK SC", sans-serif;
}
.bottom {
  height: 20px;
  flex: none;
  display: flex;
  align-items: center;
  white-space: nowrap;
}
.bb {
  flex: none;
  box-sizing: border-box;
  height: 20px;
  line-height: 19px;
  text-align: center;
  font-size: 12px;
  color: #c8c8c8;
  border-right: 1px solid #8c0000;
}
.news {
  color: #ffff54;
  font-weight: 700;
  font-size: 13px;
  flex: none;
}
.n1 {
  margin-left: 32px;
  width: 232px;
}
.n2 {
  width: 168px;
}
.search {
  width: 163px;
  height: 18px;
  background: #b4b4b4;
  color: #333;
  font-size: 13px;
  line-height: 18px;
  padding: 0 6px;
  box-sizing: border-box;
  display: flex;
  justify-content: space-between;
  align-items: center;
  flex: none;
}
.clock {
  flex: 1;
  text-align: center;
  color: #a8bcd4;
  font: 700 13.500px "Liberation Sans", sans-serif;
  border-left: 1px solid #8c0000;
  height: 20px;
  line-height: 20px;
}
</style>

<style>
html,
body {
  margin: 0;
  background: #000;
}
</style>
